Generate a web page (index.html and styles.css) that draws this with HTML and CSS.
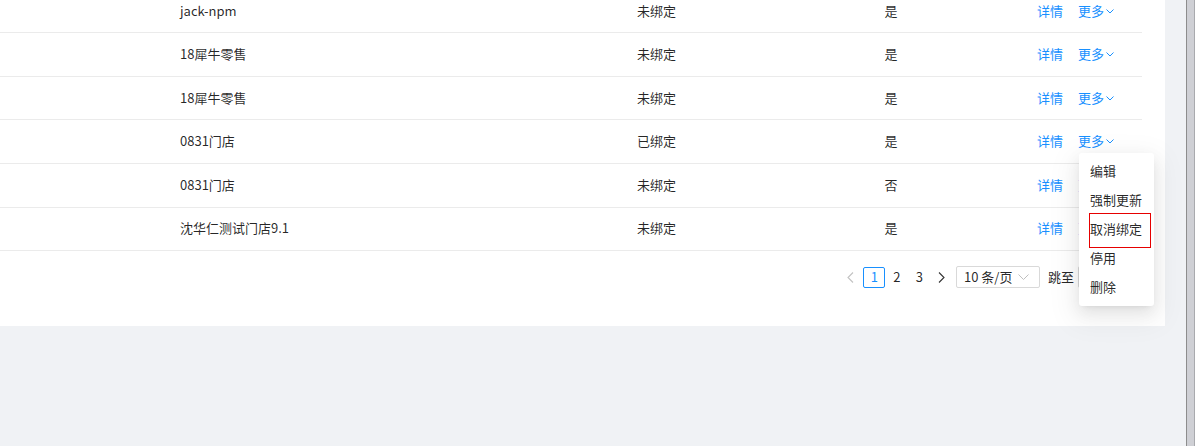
FILE: index.html
```html
<!DOCTYPE html>
<html lang="zh-CN">
<head>
<meta charset="utf-8">
<title>门店列表</title>
<link rel="stylesheet" href="styles.css">
</head>
<body>
<div class="page">
  <div class="content">
    <div class="card">
      <div class="table">
        <div class="row"><div class="c1">jack-npm</div><div class="c2">未绑定</div><div class="c3">是</div><div class="c4"><a class="link">详情</a><a class="link more">更多<svg class="chev" width="8" height="5" viewBox="0 0 8 5"><polyline points="0.5,0.5 4,4 7.5,0.5" fill="none" stroke="#1890ff" stroke-width="1"/></svg></a></div></div>
        <div class="row"><div class="c1">18犀牛零售</div><div class="c2">未绑定</div><div class="c3">是</div><div class="c4"><a class="link">详情</a><a class="link more">更多<svg class="chev" width="8" height="5" viewBox="0 0 8 5"><polyline points="0.5,0.5 4,4 7.5,0.5" fill="none" stroke="#1890ff" stroke-width="1"/></svg></a></div></div>
        <div class="row"><div class="c1">18犀牛零售</div><div class="c2">未绑定</div><div class="c3">是</div><div class="c4"><a class="link">详情</a><a class="link more">更多<svg class="chev" width="8" height="5" viewBox="0 0 8 5"><polyline points="0.5,0.5 4,4 7.5,0.5" fill="none" stroke="#1890ff" stroke-width="1"/></svg></a></div></div>
        <div class="row"><div class="c1">0831门店</div><div class="c2">已绑定</div><div class="c3">是</div><div class="c4"><a class="link">详情</a><a class="link more">更多<svg class="chev" width="8" height="5" viewBox="0 0 8 5"><polyline points="0.5,0.5 4,4 7.5,0.5" fill="none" stroke="#1890ff" stroke-width="1"/></svg></a></div></div>
        <div class="row"><div class="c1">0831门店</div><div class="c2">未绑定</div><div class="c3">否</div><div class="c4"><a class="link">详情</a><a class="link more">更多<svg class="chev" width="8" height="5" viewBox="0 0 8 5"><polyline points="0.5,0.5 4,4 7.5,0.5" fill="none" stroke="#1890ff" stroke-width="1"/></svg></a></div></div>
        <div class="row"><div class="c1">沈华仁测试门店9.1</div><div class="c2">未绑定</div><div class="c3">是</div><div class="c4"><a class="link">详情</a><a class="link more">更多<svg class="chev" width="8" height="5" viewBox="0 0 8 5"><polyline points="0.5,0.5 4,4 7.5,0.5" fill="none" stroke="#1890ff" stroke-width="1"/></svg></a></div></div>
      </div>
      <div class="pager">
        <span class="pg-item pg-prev"><svg width="7" height="11" viewBox="0 0 7 11"><polyline points="6,0.5 1,5.5 6,10.5" fill="none" stroke="#c2c2c2" stroke-width="1.1"/></svg></span>
        <span class="pg-item pg-active">1</span>
        <span class="pg-item">2</span>
        <span class="pg-item">3</span>
        <span class="pg-item pg-next"><svg width="7" height="11" viewBox="0 0 7 11"><polyline points="1,0.5 6,5.5 1,10.5" fill="none" stroke="#333" stroke-width="1.1"/></svg></span>
        <span class="pg-select"><span>10 条/页</span><svg width="11" height="6" viewBox="0 0 11 6"><polyline points="0.5,0.5 5.5,5.5 10.5,0.5" fill="none" stroke="#bfbfbf" stroke-width="1"/></svg></span>
        <span class="pg-jump">跳至<span class="pg-input"></span>页</span>
      </div>
    </div>
  </div>
  <div class="scrollbar"></div>
</div>
<div class="dropdown">
  <div class="dd-item">编辑</div>
  <div class="dd-item">强制更新</div>
  <div class="dd-item dd-marked">取消绑定</div>
  <div class="dd-item">停用</div>
  <div class="dd-item">删除</div>
</div>
</body>
</html>
```
FILE: styles.css
```css
html, body {
  margin: 0;
  padding: 0;
}
body {
  font-family: "Noto Sans CJK SC", "Noto Sans", sans-serif;
  font-size: 13px;
  color: rgba(0, 0, 0, 0.85);
  background: #f0f2f5;
  overflow: hidden;
  position: relative;
  width: 1195px;
  height: 446px;
}
.page {
  display: flex;
  height: 446px;
  background: #f0f2f5;
}
.content {
  flex: 1;
  overflow: hidden;
}
.card {
  width: 1165px;
  height: 336.3px;
  margin-top: -10.3px;
  background: #fff;
  padding-right: 23px;
  box-sizing: border-box;
}
.table {
  display: flex;
  flex-direction: column;
}
.row {
  display: grid;
  grid-template-columns: 620px 240px 62px 1fr;
  align-items: center;
  height: 43.6px;
  box-sizing: border-box;
  border-bottom: 1px solid #ebebeb;
  line-height: 20px;
  padding-bottom: 1px;
}
.c1 { padding-left: 180px; }
.c2 { padding-left: 17px; }
.c3 { text-align: center; }
.c4 {
  padding-left: 115px;
  display: flex;
  align-items: center;
  white-space: nowrap;
}
.link {
  color: #1890ff;
  cursor: pointer;
}
.more {
  margin-left: 15px;
  display: inline-flex;
  align-items: center;
}
.chev {
  margin-left: 2px;
  margin-top: 1px;
}
.pager {
  display: flex;
  justify-content: flex-end;
  align-items: center;
  padding-top: 15px;
  line-height: 20px;
}
.pg-item {
  width: 22px;
  height: 21px;
  box-sizing: border-box;
  display: flex;
  align-items: center;
  justify-content: center;
  color: rgba(0, 0, 0, 0.85);
  margin-right: 0.5px;
}
.pg-active {
  border: 1px solid #1890ff;
  color: #1890ff;
  border-radius: 2px;
  margin-left: 1px;
}
.pg-next {
  margin-right: 3px;
}
.pg-select {
  width: 84px;
  height: 22px;
  box-sizing: border-box;
  border: 1px solid #d9d9d9;
  border-radius: 2px;
  display: flex;
  align-items: center;
  justify-content: space-between;
  padding: 0 10px 0 7px;
}
.pg-jump {
  display: flex;
  align-items: center;
  margin-left: 8px;
  margin-right: 2px;
}
.pg-input {
  width: 45px;
  height: 22px;
  box-sizing: border-box;
  border: 1px solid #d9d9d9;
  border-radius: 2px;
  margin: 0 4px;
}
.scrollbar {
  width: 9px;
  flex: none;
  background: #cfd0d5;
  border-left: 1px solid #8d8d8d;
  border-right: 1px solid #a9aaae;
  box-sizing: border-box;
}
.dropdown {
  position: absolute;
  left: 1079px;
  top: 153px;
  width: 75px;
  padding: 4px 0;
  background: #fff;
  border-radius: 3px;
  box-shadow: 0 3px 6px -4px rgba(0, 0, 0, 0.12), 0 6px 16px 0 rgba(0, 0, 0, 0.08), 0 9px 28px 8px rgba(0, 0, 0, 0.05);
  box-sizing: border-box;
}
.dd-item {
  height: 29px;
  line-height: 28px;
  padding: 0 11px;
  white-space: nowrap;
  color: rgba(0, 0, 0, 0.85);
  position: relative;
}
.dd-marked::after {
  content: "";
  position: absolute;
  left: 10px;
  top: -2px;
  width: 62px;
  height: 35px;
  border: 1px solid #e60000;
  box-sizing: border-box;
}
```
